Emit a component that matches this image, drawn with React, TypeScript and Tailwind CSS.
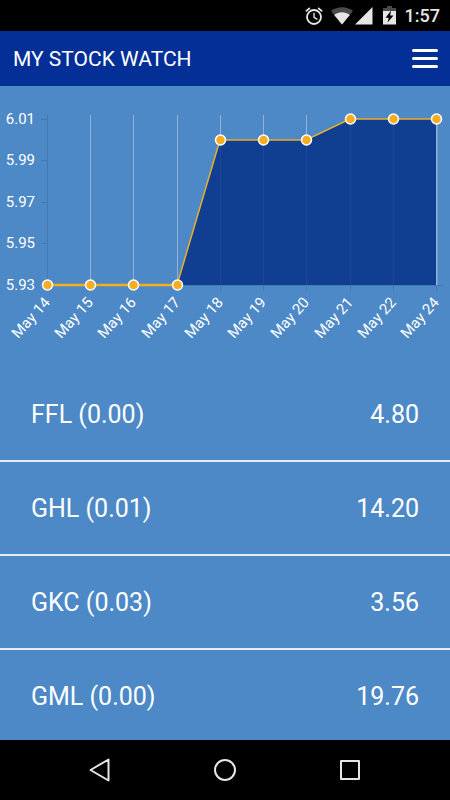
import React from 'react';

type Stock = { symbol: string; change: string; price: string };

const stocks: Stock[] = [
  { symbol: 'FFL', change: '0.00', price: '4.80' },
  { symbol: 'GHL', change: '0.01', price: '14.20' },
  { symbol: 'GKC', change: '0.03', price: '3.56' },
  { symbol: 'GML', change: '0.00', price: '19.76' },
];

const history = [
  { day: 'May 14', value: 5.93 },
  { day: 'May 15', value: 5.93 },
  { day: 'May 16', value: 5.93 },
  { day: 'May 17', value: 5.93 },
  { day: 'May 18', value: 6.0 },
  { day: 'May 19', value: 6.0 },
  { day: 'May 20', value: 6.0 },
  { day: 'May 21', value: 6.01 },
  { day: 'May 22', value: 6.01 },
  { day: 'May 24', value: 6.01 },
];

const ticks = [6.01, 5.99, 5.97, 5.95, 5.93];

// Chart plot area, in viewBox units
const LEFT = 47;
const RIGHT = 436;
const TOP = 33;
const BOTTOM = 199;

const xAt = (i: number) => Math.round(LEFT + (i * (RIGHT - LEFT)) / (history.length - 1));
const yAt = (v: number) => Math.round(BOTTOM - ((v - 5.93) / 0.08) * (BOTTOM - TOP));

function StatusBar() {
  return (
    <div className="flex h-[31px] shrink-0 items-center justify-end bg-black pr-[10px] text-[#e6e6e6]">
      <svg className="mr-2 h-[18px] w-[18px]" viewBox="0 0 18 18" fill="none" stroke="currentColor">
        <circle cx="9" cy="10" r="7" strokeWidth="1.8" />
        <path d="M9 5.8v4.6l3.4 2" strokeWidth="1.4" />
        <path d="M.8 4.3 4.8 1M17.2 4.3 13.2 1" strokeWidth="1.7" />
      </svg>
      <svg className="mr-[2px] h-[18px] w-[22px]" viewBox="0 0 22 18" fill="currentColor">
        <path d="M0 4C6.500-1 15.500-1 22 4L11 17.500Z" fill="#4a4a4a" />
        <path d="M3.200 7.900C7.800 4.200 14.200 4.200 18.800 7.900L11 17.500Z" />
      </svg>
      <svg className="mr-[10px] h-[18px] w-[18px]" viewBox="0 0 18 18" fill="currentColor">
        <path d="M0 17.500H17.500V0Z" />
      </svg>
      <svg className="mr-[9px] h-[19px] w-[13px]" viewBox="0 0 13 19" fill="currentColor">
        <path d="M4 0h5v2h4v3H0V2h4Z" fill="#4a4a4a" />
        <path d="M0 5h13v13.500H0Z" />
        <path d="M8 4.500 2.600 11.700H5.700L4.600 16.500 10.500 9.500H7.200Z" fill="#000" />
      </svg>
      <span className="text-[18px] leading-6 font-medium">1:57</span>
    </div>
  );
}

function Header() {
  return (
    <header className="flex h-[55px] shrink-0 items-center justify-between bg-[#032f97] pr-3 pl-[13px]">
      <h1 className="text-[21px] leading-7">MY STOCK WATCH</h1>
      <button type="button" aria-label="Menu" className="flex flex-col gap-[5px]">
        <span className="h-[3px] w-[26px] rounded-xs bg-white" />
        <span className="h-[3px] w-[26px] rounded-xs bg-white" />
        <span className="h-[3px] w-[26px] rounded-xs bg-white" />
      </button>
    </header>
  );
}

function PriceChart() {
  const line = history.map((p, i) => `${xAt(i)},${yAt(p.value)}`).join(' ');

  return (
    <svg className="block w-full" viewBox="0 0 450 281" role="img" aria-label="Price history">
      {/* Grid */}
      {history.map((p, i) => (
        <g key={p.day}>
          <path
            d={`M${xAt(i) + 0.5} 29V${BOTTOM}`}
            stroke={i === 0 ? '#4379b5' : '#8fb3db'}
            strokeWidth={i === history.length - 1 ? 2 : 1}
          />
          <path d={`M${xAt(i) + 0.5} ${BOTTOM}v6`} stroke="#4379b5" />
        </g>
      ))}
      <path d={`M41 ${BOTTOM + 0.5}H443`} stroke="#4379b5" />

      {ticks.map((t) => (
        <g key={t}>
          <path d={`M41 ${yAt(t) + 0.5}h7`} stroke="#4379b5" />
          <text x="35" y={yAt(t) + 5} textAnchor="end" fontSize="15" fill="#fff">
            {t.toFixed(2)}
          </text>
        </g>
      ))}

      {/* Series */}
      <polygon points={`${LEFT},${BOTTOM} ${line} ${RIGHT},${BOTTOM}`} fill="#103e91" />
      {history.slice(4, 9).map((p, i) => (
        <path key={p.day} d={`M${xAt(i + 4) + 0.5} ${yAt(p.value)}V${BOTTOM}`} stroke="#1e4897" />
      ))}
      <polyline points={line} fill="none" stroke="#e9ad2c" strokeWidth="1.5" />
      <path d={`M${LEFT} ${BOTTOM}H${xAt(3)}`} stroke="#f5ae1b" strokeWidth="2.500" />
      {history.map((p, i) => (
        <circle key={p.day} cx={xAt(i) + 0.5} cy={yAt(p.value)} r="5" fill="#f5ae22" stroke="#fff" strokeWidth="1.5" />
      ))}

      {history.map((p, i) => (
        <text
          key={p.day}
          transform={`translate(${xAt(i) + 4} 217) rotate(-48)`}
          textAnchor="end"
          fontSize="15"
          fill="#fff"
        >
          {p.day}
        </text>
      ))}
    </svg>
  );
}

function StockTable() {
  return (
    <table className="w-full border-collapse text-[25px] leading-8">
      <tbody>
        {stocks.map((s) => (
          <tr key={s.symbol} className="h-[94px] border-b-2 border-[#e4edf6]">
            <th scope="row" className="pt-[2px] pl-[31px] text-left font-normal">
              {s.symbol} ({s.change})
            </th>
            <td className="pt-[2px] pr-[31px] text-right">{s.price}</td>
          </tr>
        ))}
      </tbody>
    </table>
  );
}

function NavBar() {
  return (
    <nav className="flex h-[60px] shrink-0 items-center justify-center gap-[101px] bg-black text-[#e6e6e6]">
      <button type="button" aria-label="Back">
        <svg className="block h-6 w-6" viewBox="0 0 24 24" fill="none" stroke="currentColor" strokeWidth="2" strokeLinejoin="round">
          <path d="M2.500 12 20.500 1.500V22.500Z" />
        </svg>
      </button>
      <button type="button" aria-label="Home">
        <svg className="block h-6 w-6" viewBox="0 0 24 24" fill="none" stroke="currentColor" strokeWidth="2">
          <circle cx="12" cy="12" r="10" />
        </svg>
      </button>
      <button type="button" aria-label="Recent apps">
        <svg className="block h-6 w-6" viewBox="0 0 24 24" fill="none" stroke="currentColor" strokeWidth="2" strokeLinejoin="round">
          <path d="M3 3h18v18H3Z" />
        </svg>
      </button>
    </nav>
  );
}

export default function App() {
  return (
    <div className="flex h-screen flex-col bg-[#4d89c6] font-[Roboto,sans-serif] text-white">
      <StatusBar />
      <Header />
      <main className="min-h-0 flex-1 overflow-y-auto [scrollbar-width:none]">
        <PriceChart />
        <StockTable />
      </main>
      <NavBar />
    </div>
  );
}
